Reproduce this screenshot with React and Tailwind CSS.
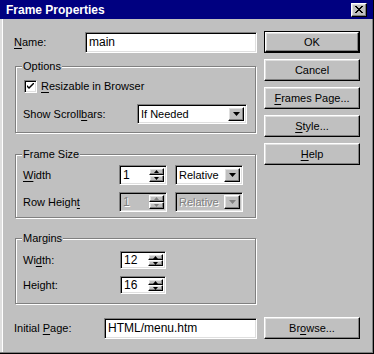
import React from 'react';

const raised =
  'bg-[#c0c0c0] border border-t-white border-l-white border-r-black border-b-black shadow-[inset_-1px_-1px_0_#808080,inset_1px_1px_0_#dfdfdf]';
const sunken =
  'border border-t-[#808080] border-l-[#808080] border-r-white border-b-white shadow-[inset_1px_1px_0_#000,inset_-1px_-1px_0_#dfdfdf]';

function U({ children }) {
  return <span className="underline underline-offset-[2px]">{children}</span>;
}

function Arrow({ up, disabled, small }) {
  const w = small ? 5 : 7;
  const h = small ? 3 : 4;
  const pts = up ? `0,${h} ${w / 2},0 ${w},${h}` : `0,0 ${w},0 ${w / 2},${h}`;
  return (
    <svg width={w} height={h} viewBox={`0 0 ${w} ${h}`}>
      <polygon points={pts} fill={disabled ? '#808080' : '#000'} />
    </svg>
  );
}

function Spin({ value, w, h, disabled }) {
  return (
    <div className={`flex ${sunken} ${disabled ? 'bg-[#c0c0c0]' : 'bg-white'} ${w} ${h} p-[2px]`}>
      <div
        className={`flex-1 flex items-center pl-[1px] text-[12px] leading-none ${
          disabled ? 'text-[#808080] [text-shadow:1px_1px_0_#fff]' : 'text-black'
        }`}
      >
        {value}
      </div>
      <div className="w-[15px] flex flex-col">
        <div className={`flex-1 flex items-center justify-center ${raised}`}>
          <Arrow up small disabled={disabled} />
        </div>
        <div className={`flex-1 flex items-center justify-center ${raised}`}>
          <Arrow small disabled={disabled} />
        </div>
      </div>
    </div>
  );
}

function Select({ value, w, disabled }) {
  return (
    <div className={`flex h-[20px] ${w} ${sunken} ${disabled ? 'bg-[#c0c0c0]' : 'bg-white'} p-[2px]`}>
      <div
        className={`flex-1 flex items-center pl-[1px] ${
          disabled ? 'text-[#808080] [text-shadow:1px_1px_0_#fff]' : 'text-black'
        }`}
      >
        {value}
      </div>
      <div className={`w-[16px] flex items-center justify-center ${raised}`}>
        <Arrow disabled={disabled} />
      </div>
    </div>
  );
}

function Group({ label, className, children }) {
  return (
    <div
      className={`relative ml-[1px] w-[241px] border border-[#808080] shadow-[inset_1px_1px_0_#fff,1px_1px_0_#fff] ${className}`}
    >
      <span className="absolute -top-[8px] left-[6px] bg-[#c0c0c0] px-[1px] leading-[14px]">{label}</span>
      {children}
    </div>
  );
}

function Button({ children, isDefault }) {
  return (
    <div className={`h-[22px] w-[96px] ${isDefault ? 'border border-black' : ''}`}>
      <div className={`h-full w-full flex items-center justify-center ${raised}`}>{children}</div>
    </div>
  );
}

export default function App() {
  return (
    <div className="w-[374px] h-[354px] bg-[#c0c0c0] flex flex-col border-r border-b border-black shadow-[inset_-1px_-1px_0_#808080,inset_2px_0_0_#dfdfdf,inset_3px_0_0_#fff] font-['Liberation_Sans',Arial,sans-serif] text-[11px] text-black select-none">
      {/* Title bar */}
      <div className="h-[19px] bg-[#000080] flex items-center justify-between pl-[6px] pr-[6px]">
        <span className="text-white font-bold text-[12px] leading-none">Frame Properties</span>
        <div className={`w-[16px] h-[14px] flex items-center justify-center ${raised}`}>
          <svg width="8" height="7" viewBox="0 0 8 7">
            <path d="M0 0 L7 7 M1 0 L8 7 M7 0 L0 7 M8 0 L1 7" stroke="#000" strokeWidth="1" />
          </svg>
        </div>
      </div>

      <div className="grid grid-cols-[243px_96px] gap-x-[7px] pl-[14px] pt-[12px]">
        {/* Left column */}
        <div className="flex flex-col">
          <div className="h-[22px] flex items-center">
            <span className="w-[71px]">
              <U>N</U>ame:
            </span>
            <div className={`w-[172px] h-[21px] bg-white ${sunken} flex items-center pl-[3px] text-[12px]`}>main</div>
          </div>

          <Group label="Options" className="mt-[13px] h-[67px] pt-[13px] pl-[7px]">
            <div className="h-[13px] flex items-center">
              <div className={`ml-[1px] w-[13px] h-[13px] bg-white ${sunken} flex items-center justify-center`}>
                <svg width="7" height="7" viewBox="0 0 7 7">
                  <path d="M0 2 L0 4 L2 6 L7 1 L7 -1 L2 4 Z" fill="#000" />
                </svg>
              </div>
              <span className="ml-[4px]">
                <U>R</U>esizable in Browser
              </span>
            </div>
            <div className="mt-[11px] flex items-center">
              <span className="w-[114px]">
                Show Scroll<U>b</U>ars:
              </span>
              <Select value="If Needed" w="w-[110px]" />
            </div>
          </Group>

          <Group label="Frame Size" className="mt-[21px] h-[64px] pt-[10px] pl-[7px]">
            <div className="h-[20px] flex items-center">
              <span className="w-[96px]">
                <U>W</U>idth
              </span>
              <Spin value="1" w="w-[48px]" h="h-[20px]" />
              <div className="ml-[8px]">
                <Select value="Relative" w="w-[68px]" />
              </div>
            </div>
            <div className="mt-[7px] h-[20px] flex items-center">
              <span className="w-[96px]">
                Row Heigh<U>t</U>
              </span>
              <Spin value="1" w="w-[48px]" h="h-[20px]" disabled />
              <div className="ml-[8px]">
                <Select value="Relative" w="w-[68px]" disabled />
              </div>
            </div>
          </Group>

          <Group label="Margins" className="mt-[20px] h-[66px] pt-[12px] pl-[7px]">
            <div className="h-[18px] flex items-center">
              <span className="w-[97px]">
                Wi<U>d</U>th:
              </span>
              <Spin value="12" w="w-[46px]" h="h-[18px]" />
            </div>
            <div className="mt-[7px] h-[18px] flex items-center">
              <span className="w-[97px]">Height:</span>
              <Spin value="16" w="w-[46px]" h="h-[18px]" />
            </div>
          </Group>
        </div>

        {/* Right column */}
        <div className="flex flex-col gap-[6px]">
          <Button isDefault>OK</Button>
          <Button>Cancel</Button>
          <Button>
            <span>
              <U>F</U>rames Page...
            </span>
          </Button>
          <Button>
            <span>
              <U>S</U>tyle...
            </span>
          </Button>
          <Button>
            <span>
              <U>H</U>elp
            </span>
          </Button>
        </div>

        {/* Initial page row */}
        <div className="mt-[13px] h-[22px] flex items-center">
          <span className="w-[90px]">
            Initial <U>P</U>age:
          </span>
          <div className={`w-[153px] h-[21px] bg-white ${sunken} flex items-center pl-[3px] text-[12px]`}>
            HTML/menu.htm
          </div>
        </div>
        <div className="mt-[13px]">
          <Button>
            <span>
              Br<U>o</U>wse...
            </span>
          </Button>
        </div>
      </div>
    </div>
  );
}
